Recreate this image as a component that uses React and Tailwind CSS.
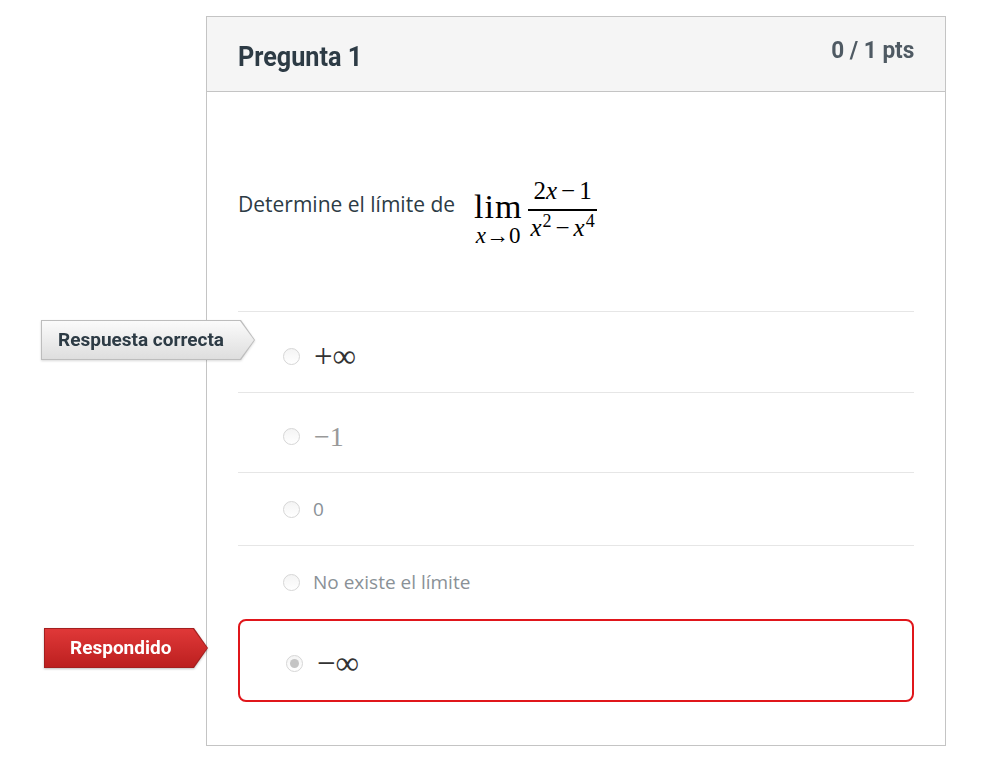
const serif = { fontFamily: '"Liberation Serif", "DejaVu Serif", serif' };
const heading = { fontFamily: 'Roboto, Lato, sans-serif' };

function Radio({ checked }) {
  return (
    <span className="flex h-[17px] w-[17px] shrink-0 items-center justify-center rounded-full border border-[#d6d6d6] bg-gradient-to-b from-[#f4f4f4] to-[#ffffff]">
      {checked && <span className="h-[9px] w-[9px] rounded-full bg-[#c4c4c4]" />}
    </span>
  );
}

function Tag({ label, red, className }) {
  return (
    <div
      className={`absolute ${className}`}
      style={{ filter: red ? "drop-shadow(0 1px 1px rgba(0,0,0,0.25))" : "drop-shadow(0 1px 1px rgba(0,0,0,0.15))" }}
    >
      <div
        className={`${red ? "bg-[#a41f1f]" : "bg-[#bdbdbd]"} h-full p-px [clip-path:polygon(0_0,calc(100%-14px)_0,100%_50%,calc(100%-14px)_100%,0_100%)]`}
      >
        <div
          className={`flex h-[38px] items-center overflow-hidden whitespace-nowrap text-[19px] font-bold [clip-path:polygon(0_0,calc(100%-14px)_0,100%_50%,calc(100%-14px)_100%,0_100%)] ${
            red
              ? "bg-gradient-to-b from-[#e03838] to-[#bc1f1f] pl-[25px] text-white"
              : "bg-gradient-to-b from-[#fbfbfb] to-[#dedede] pl-[16px] text-[#2d3b45]"
          }`}
          style={heading}
        >
          {label}
        </div>
      </div>
    </div>
  );
}

export default function App() {
  return (
    <div className="relative min-h-[773px] w-[1001px] bg-white" style={{ fontFamily: '"Open Sans", Lato, sans-serif' }}>
      <div className="pt-4 pl-[206px]">
        <div className="w-[740px] border border-[#c4c4c4] bg-white">
          <div className="flex h-[75px] items-start justify-between border-b border-[#c4c4c4] bg-[#f5f5f5] px-[31px]">
            <h2 className="mt-[24px] whitespace-nowrap text-[28px] font-bold leading-8 text-[#2d3b45]" style={heading}>
              <span className="inline-block origin-left scale-x-[0.9]">Pregunta 1</span>
            </h2>
            <div className="mt-[17px] whitespace-nowrap text-[24px] font-bold leading-8 text-[#4f5a63]" style={heading}>
              <span className="inline-block origin-right scale-x-[0.94]">0 / 1 pts</span>
            </div>
          </div>

          <div className="px-[31px] pb-[43px]">
            <div className="flex items-start pt-[86px] pb-[63px] text-[#2d3b45]">
              <span className="mt-[12px] text-[21px] leading-[28px]">Determine el límite de</span>
              <span className="ml-[19px] flex items-start text-black" style={serif}>
                <span className="mt-[12px] flex flex-col items-center leading-none">
                  <span className="text-[34px] leading-[34px] tracking-[1px]">lim</span>
                  <span className="text-[23px] leading-[24px]">
                    <i>x</i>→0
                  </span>
                </span>
                <span className="ml-[6px] flex flex-col items-center text-[25px] leading-none">
                  <span className="px-[2px] pb-[6px]">
                    2<i>x</i>
                    <span className="mx-[4px]">−</span>1
                  </span>
                  <span className="h-[2px] w-full bg-black" />
                  <span className="px-[2px] pt-[4px]">
                    <i>x</i>
                    <sup className="ml-px text-[18px]">2</sup>
                    <span className="mx-[4px]">−</span>
                    <i>x</i>
                    <sup className="ml-px text-[18px]">4</sup>
                  </span>
                </span>
              </span>
            </div>

            <div className="border-t border-[#e6e6e6]">
              <div className="flex h-[81px] items-center gap-[14px] border-b border-[#e6e6e6] pl-[45px] pt-[8px]">
                <Radio />
                <span className="text-[33px] leading-none text-[#333]" style={serif}>+∞</span>
              </div>
              <div className="flex h-[80px] items-center gap-[14px] border-b border-[#e6e6e6] pl-[45px] pt-[8px]">
                <Radio />
                <span className="text-[28px] leading-none text-[#999]" style={serif}>−1</span>
              </div>
              <div className="flex h-[73px] items-center gap-[13px] border-b border-[#e6e6e6] pl-[45px]">
                <Radio />
                <span className="text-[19px] text-[#8a9197]">0</span>
              </div>
              <div className="flex h-[73px] items-center gap-[13px] pl-[45px]">
                <Radio />
                <span className="text-[19px] text-[#8a9197]">No existe el límite</span>
              </div>
              <div className="flex h-[83px] items-center gap-[14px] rounded-[8px] border-2 border-[#e0161b] pl-[46px] pt-[6px]">
                <Radio checked />
                <span className="text-[33px] leading-none text-[#333]" style={serif}>−∞</span>
              </div>
            </div>
          </div>
        </div>
      </div>

      <Tag label="Respuesta correcta" className="left-[41px] top-[320px] w-[214px]" />
      <Tag label="Respondido" red className="left-[44px] top-[628px] w-[164px]" />
    </div>
  );
}
